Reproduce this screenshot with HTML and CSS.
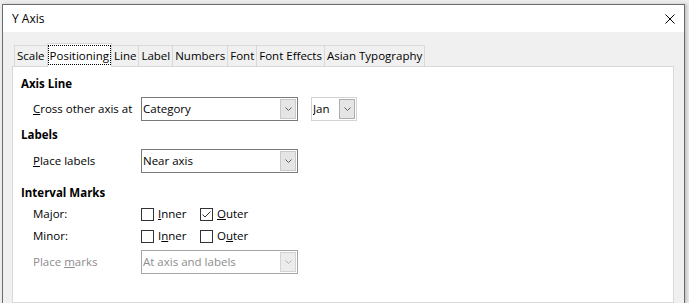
FILE: index.html
```html
<!DOCTYPE html>
<html>
<head>
<meta charset="utf-8">
<title>Y Axis</title>
<link rel="stylesheet" href="styles.css">
</head>
<body>
<div class="dialog">
  <div class="titlebar">
    <span class="title">Y Axis</span>
    <svg class="close" width="10" height="10" viewBox="0 0 10 10"><path d="M0.5 0.5L9.5 9.5M9.5 0.5L0.5 9.5" stroke="#000" stroke-width="1" fill="none"/></svg>
  </div>
  <div class="content">
    <div class="tabs">
      <div class="tab">Scale</div>
      <div class="tab sel"><span class="focus">Positioning</span></div>
      <div class="tab">Line</div>
      <div class="tab">Label</div>
      <div class="tab">Numbers</div>
      <div class="tab">Font</div>
      <div class="tab">Font Effects</div>
      <div class="tab">Asian Typography</div>
    </div>
    <div class="panel">
      <div class="heading">Axis Line</div>
      <div class="row r-cross">
        <div class="label"><u>C</u>ross other axis at</div>
        <div class="combo">
          <span class="value">Category</span>
          <span class="btn"><svg width="7" height="4" viewBox="0 0 7 4"><path d="M0.5 0.5L3.5 3.5L6.5 0.5" stroke="#606060" fill="none"/></svg></span>
        </div>
        <div class="combo small">
          <span class="value">Jan</span>
          <span class="btn"><svg width="7" height="4" viewBox="0 0 7 4"><path d="M0.5 0.5L3.5 3.5L6.5 0.5" stroke="#606060" fill="none"/></svg></span>
        </div>
      </div>
      <div class="heading h-labels">Labels</div>
      <div class="row r-place">
        <div class="label"><u>P</u>lace labels</div>
        <div class="combo">
          <span class="value">Near axis</span>
          <span class="btn"><svg width="7" height="4" viewBox="0 0 7 4"><path d="M0.5 0.5L3.5 3.5L6.5 0.5" stroke="#606060" fill="none"/></svg></span>
        </div>
      </div>
      <div class="heading h-interval">Interval Marks</div>
      <div class="row check-row r-major">
        <div class="label">Major:</div>
        <div class="check first"><span class="box"></span><span><u>I</u>nner</span></div>
        <div class="check"><span class="box"><svg width="11" height="11" viewBox="0 0 11 11"><path d="M1.5 5.5L4 8L9.5 2.5" stroke="#333" fill="none"/></svg></span><span><u>O</u>uter</span></div>
      </div>
      <div class="row check-row">
        <div class="label">Minor:</div>
        <div class="check first"><span class="box"></span><span>I<u>n</u>ner</span></div>
        <div class="check"><span class="box"></span><span>O<u>u</u>ter</span></div>
      </div>
      <div class="row r-marks disabled">
        <div class="label">Place <u>m</u>arks</div>
        <div class="combo">
          <span class="value">At axis and labels</span>
          <span class="btn"><svg width="7" height="4" viewBox="0 0 7 4"><path d="M0.5 0.5L3.5 3.5L6.5 0.5" stroke="#b0b0b0" fill="none"/></svg></span>
        </div>
      </div>
    </div>
  </div>
</div>
</body>
</html>
```
FILE: styles.css
```css
html, body {
  margin: 0;
  height: 303px;
  overflow: hidden;
  background: #ececec;
}
body {
  box-sizing: border-box;
  padding: 4px 0 0 2px;
  font-family: "Open Sans", sans-serif;
  font-size: 11.5px;
  line-height: 16px;
  color: #000;
}
.dialog {
  width: 683px;
  height: 299px;
  box-sizing: border-box;
  border: 1px solid #6b6b6b;
  border-bottom: none;
  background: #f0f0f0;
  display: flex;
  flex-direction: column;
  box-shadow: 2px 0 3px rgba(0, 0, 0, 0.18);
}
.titlebar {
  flex: none;
  height: 27px;
  background: #fff;
  display: flex;
  align-items: center;
  padding-left: 9px;
}
.title {
  font-size: 12px;
}
.close {
  margin-left: auto;
  margin-right: 9px;
  margin-top: 1px;
}
.content {
  flex: 1;
  display: flex;
  flex-direction: column;
  padding: 11px 10px 0 9px;
  min-height: 0;
}
.tabs {
  display: flex;
  align-items: flex-end;
  padding-left: 2px;
  height: 23px;
  flex: none;
}
.tab {
  border: 1px solid #d9d9d9;
  border-bottom: none;
  background: #f0f0f0;
  padding: 2px 2px 2px;
  margin-left: -1px;
  white-space: nowrap;
}
.tab:first-child {
  margin-left: 0;
}
.tab.sel {
  position: relative;
  z-index: 1;
  background: #fff;
  padding: 1px 0 2px;
  margin-bottom: -1px;
}
.focus {
  display: block;
  border: 1px dotted #000;
  padding: 2px 1px 0;
}
.panel {
  flex: 1;
  background: #fff;
  border: 1px solid #d9d9d9;
  padding: 9px 0 0 8px;
}
.heading {
  font-weight: bold;
}
.h-labels {
  margin-top: 6px;
}
.h-interval {
  margin-top: 12px;
}
.row {
  display: flex;
  align-items: center;
  height: 24px;
}
.r-cross {
  margin-top: 5px;
}
.r-place {
  margin-top: 6px;
}
.check-row {
  height: 22px;
}
.r-major {
  margin-top: 2px;
}
.r-marks {
  margin-top: 3px;
}
.label {
  width: 108px;
  padding-left: 12px;
  flex: none;
}
.combo {
  box-sizing: border-box;
  width: 157px;
  height: 24px;
  border: 1px solid #7a7a7a;
  background: #fff;
  display: flex;
  align-items: center;
  padding: 1px;
}
.combo .value {
  flex: 1;
  padding-left: 0;
  white-space: nowrap;
  overflow: hidden;
}
.combo .btn {
  box-sizing: border-box;
  width: 16px;
  height: 100%;
  background: #e5e5e5;
  border: 1px solid #c9c9c9;
  display: flex;
  align-items: center;
  justify-content: center;
}
.combo.small {
  width: 46px;
  margin-left: 13px;
  border-color: #d3d3d3;
}
.combo.small .btn {
  border-color: #adadad;
}
.disabled .label,
.disabled .value {
  color: #8d8d8d;
}
.disabled .combo {
  border-color: #a6a6a6;
}
.disabled .combo .btn {
  background: #ececec;
  border-color: #d4d4d4;
}
.check {
  display: flex;
  align-items: center;
}
.check.first {
  width: 59px;
}
.box {
  box-sizing: border-box;
  width: 13px;
  height: 13px;
  border: 1px solid #333;
  background: #fff;
  margin-right: 4px;
  display: flex;
  align-items: center;
  justify-content: center;
}
```
